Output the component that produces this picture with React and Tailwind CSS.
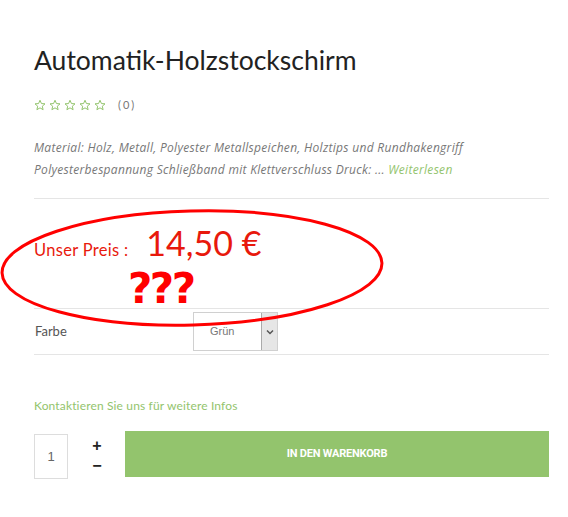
import React from "react";

function Star() {
  return (
    <svg width="12" height="12" viewBox="0 0 24 24" fill="none" stroke="#93c46d" strokeWidth="2" strokeLinejoin="round">
      <path d="M12 2.5l2.9 6.6 7.1.6-5.4 4.7 1.6 7-6.2-3.7-6.2 3.7 1.6-7L2 9.7l7.1-.6z" />
    </svg>
  );
}

export default function App() {
  return (
    <div className="relative w-[568px] h-[517px] bg-white overflow-hidden pl-[34px] pr-[19px] font-['Lato',sans-serif]">
      <h1 className="pt-[44px] text-[26.5px] leading-[32px] text-[#222] font-normal">Automatik-Holzstockschirm</h1>
      <div className="mt-[22px] flex items-center gap-[3px] h-[14px]">
        <Star /><Star /><Star /><Star /><Star />
        <span className="ml-[9px] text-[11px] text-[#777] tracking-[2px]">(0)</span>
      </div>
      <p className="mt-[25px] text-[12px] leading-[22px] italic text-[#777] font-['Open_Sans',sans-serif] tracking-[0.3px]">
        Material: Holz, Metall, Polyester Metallspeichen, Holztips und Rundhakengriff
        <br />
        Polyesterbespannung Schließband mit Klettverschluss Druck: ... <span className="text-[#93c46d]">Weiterlesen</span>
      </p>
      <div className="mt-[17px] border-t border-[#e5e5e5]" />
      <div className="relative h-[109px]">
        <div className="flex items-baseline pt-[24px]">
          <span className="text-[16.5px] text-[#e8190c] tracking-[0.3px]">Unser Preis :</span>
          <span className="ml-[18px] text-[34px] leading-[40px] text-[#e8190c]">14,50 €</span>
        </div>
        <span className="absolute left-[94px] top-[69px] text-[42px] leading-[42px] font-bold text-[#f00] font-['DejaVu_Sans',sans-serif] tracking-[-2.5px]">???</span>
      </div>
      <div className="border-t border-[#e5e5e5]" />
      <div className="flex items-center h-[45px]">
        <span className="w-[159px] text-[13px] text-[#555] pl-[1px]">Farbe</span>
        <div className="flex h-[39px] w-[85px] border border-[#d0d0d0] bg-white">
          <span className="flex-1 flex items-center pl-[16px] text-[11px] text-[#777] font-['Liberation_Sans',sans-serif]">Grün</span>
          <span className="w-[16px] flex items-center justify-center bg-[#e6e6e6] border-l border-[#aaa]">
            <svg width="8" height="6" viewBox="0 0 8 6"><path d="M1 1.5l3 3 3-3" stroke="#555" strokeWidth="1.5" fill="none" /></svg>
          </span>
        </div>
      </div>
      <div className="border-t border-[#e5e5e5]" />
      <p className="mt-[43px] text-[12px] leading-[16px] text-[#93c46d] tracking-[0.15px]">Kontaktieren Sie uns für weitere Infos</p>
      <div className="mt-[17px] flex items-start">
        <div className="mt-[3px] w-[34px] h-[45px] border border-[#ddd] flex items-center justify-center text-[13px] text-[#666] font-['Liberation_Sans',sans-serif]">1</div>
        <div className="w-[57px] flex flex-col items-center pt-[5px] pl-[1px] text-[#222] font-['Liberation_Sans',sans-serif] font-bold">
          <span className="text-[16px] leading-[20px]">+</span>
          <span className="text-[16px] leading-[20px]">−</span>
        </div>
        <button className="flex-1 h-[46px] bg-[#93c46d] text-white text-[11px] font-bold font-['Roboto',sans-serif] tracking-[-0.2px]">IN DEN WARENKORB</button>
      </div>
      <svg className="absolute left-0 top-[205px]" width="390" height="126" viewBox="0 0 390 126">
        <ellipse cx="192" cy="63" rx="190" ry="57" fill="none" stroke="#f00" strokeWidth="3" transform="rotate(-1.5 192 63)" />
      </svg>
    </div>
  );
}
